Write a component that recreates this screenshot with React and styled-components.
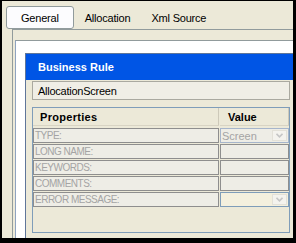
import React from "react";
import styled, { createGlobalStyle } from "styled-components";

const GlobalStyle = createGlobalStyle`
  html, body { margin: 0; padding: 0; background: #000; }
  body {
    font-family: "Liberation Sans", Arial, sans-serif;
    font-size: 11px;
    color: #000;
  }
`;

const Window = styled.div`
  margin: 1px 0 0 2px;
  width: 291px;
  height: 237px;
  overflow: hidden;
  background: #ece9d8;
`;

const TabStrip = styled.div`
  display: flex;
  align-items: flex-end;
  height: 28px;
  box-sizing: border-box;
  padding: 5px 0 0 4px;
`;

const Tab = styled.div`
  height: 23px;
  box-sizing: border-box;
  display: flex;
  align-items: center;
  white-space: nowrap;
  letter-spacing: -0.2px;
  padding: ${(p) => (p.$active ? "0 14px" : "0 10px 0 11px")};
  background: ${(p) => (p.$active ? "#fcfcfe" : "transparent")};
  border: ${(p) => (p.$active ? "1px solid #919b9c" : "none")};
  border-radius: 3px;
`;

const TabPanel = styled.div`
  margin-left: 10px;
  border-top: 1px solid #919b9c;
  border-left: 1px solid #919b9c;
  padding: 10px 0 0 2px;
`;

const Sheet = styled.div`
  background: #fff;
  border-top: 1px solid #919b9c;
  border-left: 1px solid #8fa3c0;
  padding: 12px 0 0 9px;
`;

const RulePanel = styled.div`
  width: 273px;
  box-sizing: border-box;
  border: 1px solid #5f7699;
  background: #ece9d8;
`;

const RuleHeader = styled.div`
  height: 26px;
  background: #0055e5;
  color: #fff;
  font-weight: bold;
  padding-left: 12px;
  display: flex;
  align-items: center;
`;

const RuleBody = styled.div`
  padding: 1px 7px 10px 6px;
  display: flex;
  flex-direction: column;
  gap: 7px;
`;

const NameBox = styled.div`
  height: 19px;
  box-sizing: border-box;
  border: 1px solid #aaa9a0;
  background: #f0eee6;
  padding-left: 5px;
  display: flex;
  align-items: center;
  letter-spacing: -0.25px;
`;

const PropTable = styled.div`
  height: 126px;
  box-sizing: border-box;
  border: 1px solid #7f9db9;
  display: grid;
  grid-template-columns: 186px 69px;
  column-gap: 1px;
  row-gap: 1px;
  align-content: start;
`;

const HeadCell = styled.div`
  height: 18px;
  box-sizing: border-box;
  margin-bottom: 1px;
  font-weight: bold;
  padding-left: ${(p) => p.$pad}px;
  display: flex;
  align-items: center;
  border-bottom: 1px solid #d8d4c4;
  border-right: 1px solid #cdc9b9;
  letter-spacing: ${(p) => p.$spacing || 0}px;
`;

const cellBorder = {
  plain: "#8e8e8e",
  combo: "#a6b5cb",
  focus: "#7f9db9",
};

const Cell = styled.div`
  height: 15px;
  box-sizing: border-box;
  border: 1px solid ${(p) => cellBorder[p.$tone || "plain"]};
  background: ${(p) => (p.$tone === "focus" ? "#f4f0de" : "#eeede6")};
  color: #a4a4a4;
  display: flex;
  align-items: center;
  justify-content: space-between;
  padding-left: 1px;
  overflow: hidden;
  white-space: nowrap;
`;

const Label = styled.span`
  font-size: 10px;
  letter-spacing: -0.5px;
`;

const ComboText = styled.span`
  font-size: 11px;
`;

const DropButton = styled.span`
  width: 15px;
  height: 11px;
  box-sizing: border-box;
  margin-right: 1px;
  margin-left: auto;
  background: #f4f3ee;
  border: 1px solid #e3e1d8;
  display: flex;
  align-items: center;
  justify-content: center;
`;

const Chevron = () => (
  <svg width="7" height="5" viewBox="0 0 7 5">
    <path d="M0.5 0.8 L3.5 3.8 L6.5 0.8" fill="none" stroke="#c6c6c6" strokeWidth="1.6" />
  </svg>
);

const rows = [
  { label: "TYPE:", value: "Screen", tone: "combo", drop: true },
  { label: "LONG NAME:" },
  { label: "KEYWORDS:" },
  { label: "COMMENTS:" },
  { label: "ERROR MESSAGE:", tone: "focus", drop: true },
];

export default function App() {
  return (
    <>
      <GlobalStyle />
      <Window>
        <TabStrip>
          <Tab $active>General</Tab>
          <Tab>Allocation</Tab>
          <Tab>Xml Source</Tab>
        </TabStrip>
        <TabPanel>
          <Sheet>
            <RulePanel>
              <RuleHeader>Business Rule</RuleHeader>
              <RuleBody>
                <NameBox>AllocationScreen</NameBox>
                <PropTable>
                  <HeadCell $pad={7} $spacing={0.3}>Properties</HeadCell>
                  <HeadCell $pad={8}>Value</HeadCell>
                  {rows.map((r) => (
                    <React.Fragment key={r.label}>
                      <Cell>
                        <Label>{r.label}</Label>
                      </Cell>
                      <Cell $tone={r.tone}>
                        {r.value ? <ComboText>{r.value}</ComboText> : null}
                        {r.drop ? (
                          <DropButton>
                            <Chevron />
                          </DropButton>
                        ) : null}
                      </Cell>
                    </React.Fragment>
                  ))}
                </PropTable>
              </RuleBody>
            </RulePanel>
          </Sheet>
        </TabPanel>
      </Window>
    </>
  );
}
